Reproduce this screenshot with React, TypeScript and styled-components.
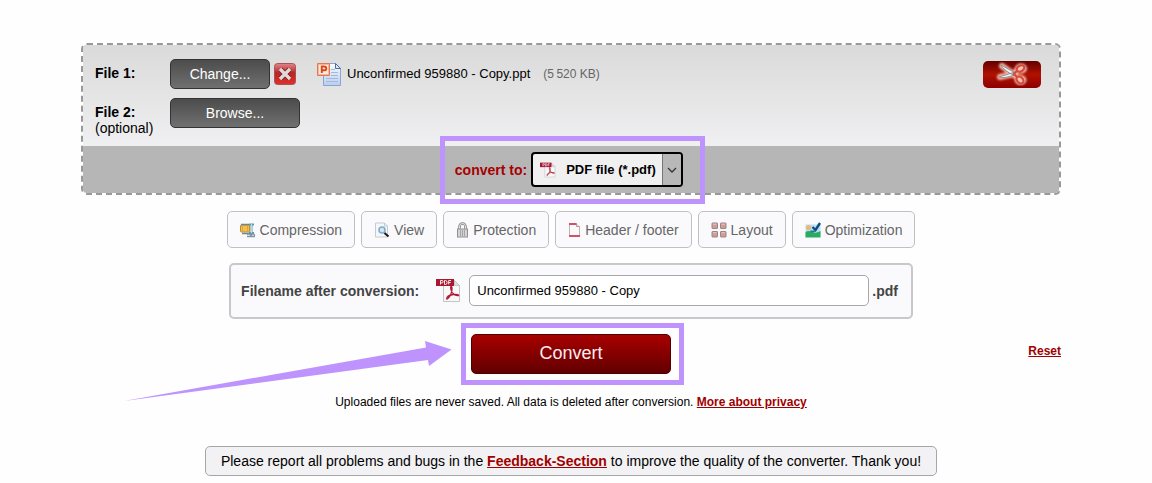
import React from "react";
import styled, { createGlobalStyle } from "styled-components";

const GlobalStyle = createGlobalStyle`
  * { box-sizing: border-box; }
  body {
    margin: 0;
    background: #fefefe;
    color: #000;
    font: 14px/16px "Liberation Sans", Arial, sans-serif;
  }
  button, input, select { font: inherit; margin: 0; }
  svg { display: block; flex: none; }
`;

const Page = styled.main`
  max-width: 990px;
  margin: 0 auto;
  padding: 43px 10px 7px 0;
`;

const Panel = styled.section`
  border: 2px dashed #999;
  border-radius: 6px;
  background: #b6b6b6;
  background-clip: padding-box;
`;

const Files = styled.div`
  display: flex;
  flex-direction: column;
  gap: 9px;
  padding: 14px 18px 10px 12px;
  border-radius: 4px 4px 0 0;
  background: linear-gradient(#dadada, #f0eff1);
`;

const FileRow = styled.div`
  display: flex;
  align-items: flex-start;
`;

const FileLabel = styled.label`
  width: 75px;
  padding-top: 6px;
  line-height: 16px;
`;

const DarkButton = styled.button<{ $width: number }>`
  width: ${(p) => p.$width}px;
  height: 30px;
  padding: 0;
  border: 1px solid #333;
  border-radius: 5px;
  background: linear-gradient(#4c4c4c, #707070);
  color: #fff;
`;

const DeleteButton = styled.button`
  width: 22px;
  height: 22px;
  margin: 4px 21px 0 4px;
  padding: 0;
  border: 0;
  background: none;
`;

const FileInfo = styled.div`
  display: flex;
  align-items: center;
  gap: 5px;
  height: 30px;
  font-size: 13px;
`;

const FileSize = styled.span`
  margin-left: 8px;
  color: #666;
  font-size: 12px;
`;

const CutButton = styled.button`
  display: flex;
  align-items: center;
  justify-content: center;
  width: 58px;
  height: 27px;
  margin: 2px 0 0 auto;
  padding: 0;
  border: 0;
  border-radius: 5px;
  background: linear-gradient(#620000, #b01200 50%, #8c0000);
`;

const FormatBar = styled.div`
  display: flex;
  justify-content: center;
  padding: 6px 4px 6px 0;
`;

const FormatField = styled.div`
  position: relative;
  display: flex;
  align-items: center;
  gap: 4px;
`;

const FormatLabel = styled.label`
  color: #a80000;
  font-weight: bold;
`;

const Highlight = styled.span<{ $inset: string }>`
  position: absolute;
  inset: ${(p) => p.$inset};
  border: 5px solid #be93fd;
  pointer-events: none;
`;

const SelectBox = styled.div`
  position: relative;
`;

const FormatSelect = styled.select`
  appearance: none;
  display: block;
  width: 152px;
  height: 35px;
  padding: 0 20px 0 33px;
  border: 2px solid #000;
  border-radius: 4px;
  background: #f0f0f0;
  color: #000;
  font-size: 13px;
  font-weight: bold;
`;

const SelectIcon = styled.span`
  position: absolute;
  top: 10px;
  left: 9px;
  pointer-events: none;
`;

const SelectArrow = styled.span`
  position: absolute;
  top: 2px;
  right: 2px;
  bottom: 2px;
  display: flex;
  align-items: center;
  justify-content: center;
  width: 19px;
  border-left: 1px solid #777;
  border-radius: 0 2px 2px 0;
  background: #b8b8b8;
  pointer-events: none;
`;

const Options = styled.div`
  display: flex;
  flex-wrap: wrap;
  justify-content: center;
  gap: 6px;
  margin-top: 16px;
`;

const OptionButton = styled.button`
  display: flex;
  align-items: center;
  gap: 4px;
  height: 37px;
  padding: 0 12px;
  border: 1px solid #c0bfc4;
  border-radius: 5px;
  background: #fafafd;
  color: #666;
`;

const FilenameBox = styled.div`
  display: flex;
  align-items: center;
  width: fit-content;
  margin: 15px auto 0;
  padding: 10px 13px 11px 10px;
  border: 2px solid #c8c7cb;
  border-radius: 5px;
  background: #fafafd;
  color: #444;
  font-weight: bold;
`;

const FilenameLabel = styled.label`
  margin-right: 17px;
`;

const FilenameInput = styled.input`
  width: 400px;
  height: 31px;
  margin: 0 3px 0 8px;
  padding: 0 7px;
  border: 1px solid #a8a8ac;
  border-radius: 5px;
  background: #fff;
  color: #000;
  font-size: 13px;
  font-weight: normal;
`;

const SubmitRow = styled.div`
  display: grid;
  grid-template-columns: 1fr auto 1fr;
  margin-top: 15px;
`;

const SubmitField = styled.div`
  position: relative;
  grid-column: 2;
`;

const ConvertButton = styled.button`
  display: block;
  width: 200px;
  height: 40px;
  padding: 0 0 2px;
  border: 1px solid #500000;
  border-radius: 5px;
  background: linear-gradient(#a80000, #620000);
  color: #fbeef2;
  font-size: 18px;
`;

const Pointer = styled.svg`
  position: absolute;
  top: 7px;
  right: 219px;
  pointer-events: none;
`;

const RedLink = styled.a`
  color: #a00000;
  font-weight: bold;
  text-decoration: underline;
`;

const ResetLink = styled(RedLink)`
  justify-self: end;
  align-self: start;
  margin-top: 9px;
  font-size: 12px;
`;

const Privacy = styled.p`
  margin: 20px 0 0;
  font-size: 12px;
  text-align: center;
`;

const Feedback = styled.p`
  width: fit-content;
  margin: 36px auto 0;
  padding: 6px 15px;
  border: 1px solid #a6a6aa;
  border-radius: 5px;
  background: #f2f1f3;
`;

const PdfIcon = ({ size }: { size: number }) => (
  <svg width={size} height={size} viewBox="0 0 25 25" aria-hidden="true">
    <path d="M7.5 2.5h11l5 5v16h-16z" fill="#f8f8f8" stroke="#c4c4c6" />
    <path d="M18.5 2.5v5h5z" fill="#ddd" stroke="#bbb" strokeWidth=".7" />
    <path d="M0 1h18v7H0z" fill="#a81830" />
    <path
      d="M4.5 6.5v-4h1.6q1 0 1 1.2t-1 1.2H4.5M8.5 2.5v4h1q1.6 0 1.600-2t-1.600-2zM12.700 6.500v-4h2.300M12.700 4.500h2"
      fill="none"
      stroke="#fff"
      strokeWidth=".9"
    />
    <path
      d="M15.300 8.500c-1.300 0-.5 3.500 1 6 1.300 2 3.500 3.300 5.800 3.200 2-.4-1.500-1.900-5.100-1.200-3.100.6-6.300 2.200-6.300 4.100 0 1.500 2.400-.7 4-4.200 1.400-3 1.800-7.900.6-7.900z"
      fill="none"
      stroke="#b31b34"
      strokeWidth="1.300"
    />
  </svg>
);

const PptIcon = () => (
  <svg width="25" height="25" viewBox="0 0 25 25" aria-hidden="true">
    <defs>
      <linearGradient id="sheet" x1="0" y1="0" x2="0" y2="1">
        <stop offset="0" stopColor="#fafcff" />
        <stop offset="1" stopColor="#b8cdee" />
      </linearGradient>
    </defs>
    <path d="M6.500 1.500h12l5 5v17h-17z" fill="url(#sheet)" stroke="#8aa5d4" />
    <path d="M18.500 1.500v5h5z" fill="#dbe7fa" stroke="#4d6ba5" />
    <path d="M14 7.500h4M14 10.500h7M14 13.500h7M9 16.500h12M9 19.500h12" stroke="#a3b8da" />
    <path d="M.5 1.500h12v12H.5z" fill="#f9b59a" stroke="#e07850" />
    <path d="M2 3h9v9H2z" fill="#ffe9dc" />
    <path d="M4.800 11V4.500h2q2.500 0 2.500 1.900t-2.500 1.900H4.800" fill="none" stroke="#d9481c" strokeWidth="1.900" />
  </svg>
);

const DeleteIcon = () => (
  <svg width="22" height="22" viewBox="0 0 22 22" aria-hidden="true">
    <defs>
      <linearGradient id="del" x1="0" y1="0" x2="0" y2="1">
        <stop offset="0" stopColor="#e0888a" />
        <stop offset=".45" stopColor="#b82427" />
        <stop offset="1" stopColor="#e2302c" />
      </linearGradient>
    </defs>
    <rect x=".5" y=".5" width="21" height="21" rx="3" fill="url(#del)" stroke="#a85456" />
    <path d="M6.500 6.500l9 9M15.500 6.500l-9 9" stroke="#7a1a1a" strokeWidth="5" />
    <path d="M6 6l10 10M16 6L6 16" stroke="#dedada" strokeWidth="3.400" />
  </svg>
);

const ScissorsIcon = () => (
  <svg width="36" height="27" viewBox="0 0 36 27" aria-hidden="true">
    <defs>
      <filter id="glow" x="-20%" y="-20%" width="140%" height="140%">
        <feGaussianBlur stdDeviation="1" />
      </filter>
    </defs>
    <g fill="none" stroke="#ffd8cc" strokeLinecap="round" filter="url(#glow)" opacity=".85">
      <path d="M8 5l11 8 5 4M6 16l14-3 4-5" strokeWidth="6" />
      <ellipse cx="27" cy="7.500" rx="3.500" ry="2.500" strokeWidth="5" />
      <ellipse cx="26.500" cy="19" rx="3.500" ry="2.500" strokeWidth="5" />
    </g>
    <path
      d="M7 4q2 5 13 10.500l1.500-2.500zM5 16q4 2 15.500-2l.500-3z"
      fill="#f4f5f6"
      stroke="#8b8386"
      strokeWidth=".9"
    />
    <path d="M19 13.500l4.500-4M19 12l4.500 4.500" stroke="#dc4934" strokeWidth="2.200" />
    <ellipse cx="26.500" cy="7.500" rx="4" ry="2.800" transform="rotate(-30 26.500 7.500)" fill="#f0c5ba" stroke="#d94a38" strokeWidth="2.200" />
    <ellipse cx="26" cy="19" rx="4" ry="2.800" transform="rotate(45 26 19)" fill="#f0c5ba" stroke="#d94a38" strokeWidth="2.200" />
    <circle cx="20" cy="12.800" r=".8" fill="#777" />
  </svg>
);

const OptionIcon = ({ width = 16, children }: { width?: number; children: React.ReactNode }) => (
  <svg width={width} height="16" viewBox={`0 0 ${width} 16`} aria-hidden="true">
    {children}
  </svg>
);

const CompressionIcon = () => (
  <OptionIcon>
    <path d="M9 2.500h5M9 11h5M11.500 2v9" stroke="#6797b0" strokeWidth="2" />
    <path d="M11.500 2v9" stroke="#b7dbe8" />
    <rect x=".5" y="3" width="9" height="7" rx="1" fill="#f5c14b" stroke="#b98c36" />
    <path d="M2.500 3.500v6M7.500 3.500v6" stroke="#e0a53a" />
    <path d="M1 2.500h8M2 11.500h8" stroke="#6d8795" strokeWidth="1.300" />
    <path d="M7 12.500l2-1 2 2 2-2 2 2M7 14.500h8" fill="none" stroke="#7d94a8" strokeWidth="1.400" />
  </OptionIcon>
);

const ViewIcon = () => (
  <OptionIcon>
    <path d="M1.500 1h9l3 3v11h-12z" fill="#f4f7fa" stroke="#c4ccd3" />
    <path d="M10.500 1v3h3" fill="none" stroke="#c4ccd3" />
    <circle cx="8" cy="8" r="3" fill="#cfe7f7" stroke="#86abc8" strokeWidth="1.600" />
    <path d="M10.500 11l4 3.500" stroke="#171717" strokeWidth="2" />
  </OptionIcon>
);

const ProtectionIcon = () => (
  <OptionIcon width={13}>
    <path d="M3.500 8V4.500a3 3 0 0 1 6 0V8" fill="none" stroke="#858585" strokeWidth="2.600" />
    <path d="M3.500 8V4.500a3 3 0 0 1 6 0V8" fill="none" stroke="#ededed" />
    <rect x="1.500" y="7" width="10" height="8" fill="#d4d4d6" stroke="#909090" />
    <path d="M4.500 8v6M6.500 8v6M8.500 8v6" stroke="#a4a4a6" />
  </OptionIcon>
);

const HeaderIcon = () => (
  <OptionIcon width={13}>
    <path d="M1.500 1.500h7l3 3v10h-10z" fill="#fafafa" stroke="#bcb4b6" />
    <path d="M1 2h7.500M1 14h11" stroke="#d64f66" strokeWidth="2.200" />
    <path d="M8.500 1.500v3h3" fill="#eee" stroke="#c48d96" />
  </OptionIcon>
);

const LayoutIcon = () => (
  <OptionIcon>
    {[[1, 1], [9.5, 1], [1, 9.5], [9.5, 9.5]].map(([x, y]) => (
      <g key={`${x}-${y}`}>
        <rect x={x} y={y} width="5.500" height="5.500" rx=".5" fill="#cf9c98" stroke="#998582" />
        <path d={`M${x + 1} ${y + 1.2}h3.500`} stroke="#e6c5c1" />
      </g>
    ))}
  </OptionIcon>
);

const OptimizationIcon = () => (
  <OptionIcon>
    <path d="M.5 2.500h15v12.500H.5z" fill="#b9e1f3" />
    <circle cx="3.500" cy="5.500" r="2.600" fill="#e9b77b" />
    <path d="M.5 10q3-2 6.500 0t8.500-1v6.500H.5z" fill="#2bab62" />
    <path d="M7.500 5l3 3 4.500-7" fill="none" stroke="#124e79" strokeWidth="2.400" />
    <path d="M5 8.500h6l-2 2H6z" fill="#1b7b91" />
  </OptionIcon>
);

const options = [
  { name: "Compression", Icon: CompressionIcon },
  { name: "View", Icon: ViewIcon },
  { name: "Protection", Icon: ProtectionIcon },
  { name: "Header / footer", Icon: HeaderIcon },
  { name: "Layout", Icon: LayoutIcon },
  { name: "Optimization", Icon: OptimizationIcon },
];

export default function App() {
  return (
    <>
      <GlobalStyle />
      <Page>
        <Panel>
          <Files>
            <FileRow>
              <FileLabel htmlFor="file1"><b>File 1:</b></FileLabel>
              <DarkButton id="file1" type="button" $width={100}>Change...</DarkButton>
              <DeleteButton type="button" aria-label="Remove file"><DeleteIcon /></DeleteButton>
              <FileInfo>
                <PptIcon />
                <span>Unconfirmed 959880 - Copy.ppt</span>
                <FileSize>(5&#8201;520 KB)</FileSize>
              </FileInfo>
              <CutButton type="button" aria-label="Cut pages"><ScissorsIcon /></CutButton>
            </FileRow>
            <FileRow>
              <FileLabel htmlFor="file2"><b>File 2:</b><br />(optional)</FileLabel>
              <DarkButton id="file2" type="button" $width={130}>Browse...</DarkButton>
            </FileRow>
          </Files>
          <FormatBar>
            <FormatField>
              <FormatLabel htmlFor="format">convert to:</FormatLabel>
              <SelectBox>
                <FormatSelect id="format" defaultValue="pdf">
                  <option value="pdf">PDF file (*.pdf)</option>
                </FormatSelect>
                <SelectIcon><PdfIcon size={16} /></SelectIcon>
                <SelectArrow>
                  <svg width="10" height="6" viewBox="0 0 10 6" aria-hidden="true">
                    <path d="M1 1l4 4 4-4" fill="none" stroke="#333" strokeWidth="1.300" />
                  </svg>
                </SelectArrow>
              </SelectBox>
              <Highlight $inset="-16px -22px -17px -15px" />
            </FormatField>
          </FormatBar>
        </Panel>

        <Options>
          {options.map(({ name, Icon }) => (
            <OptionButton key={name} type="button"><Icon />{name}</OptionButton>
          ))}
        </Options>

        <FilenameBox>
          <FilenameLabel htmlFor="filename">Filename after conversion:</FilenameLabel>
          <PdfIcon size={25} />
          <FilenameInput id="filename" type="text" defaultValue="Unconfirmed 959880 - Copy" />
          <span>.pdf</span>
        </FilenameBox>

        <SubmitRow>
          <SubmitField>
            <ConvertButton type="submit">Convert</ConvertButton>
            <Highlight $inset="-11px -13px -11px -10px" />
            <Pointer width="328" height="61" viewBox="0 0 328 61" aria-hidden="true">
              <path d="M0 60L302 6.500 301 0 327.500 8.500 305 25 304 19z" fill="#be93fd" />
            </Pointer>
          </SubmitField>
          <ResetLink href="#reset">Reset</ResetLink>
        </SubmitRow>

        <Privacy>
          Uploaded files are never saved. All data is deleted after conversion.{" "}
          <RedLink href="#privacy">More about privacy</RedLink>
        </Privacy>

        <Feedback>
          Please report all problems and bugs in the <RedLink href="#feedback">Feedback-Section</RedLink> to
          improve the quality of the converter. Thank you!
        </Feedback>
      </Page>
    </>
  );
}
